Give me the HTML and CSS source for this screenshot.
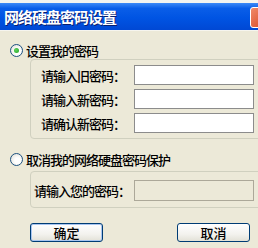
FILE: index.html
```html
<!DOCTYPE html>
<html lang="zh-CN">
  <head>
    <meta charset="UTF-8" />
    <title>网络硬盘密码设置</title>
    <link rel="stylesheet" href="styles.css">
  </head>
  <body>
    <div class="dialog">
      <div class="behind"></div>
      <header class="titlebar">
        <h1>网络硬盘密码设置</h1>
        <span class="close"></span>
      </header>
      <div class="client">
        <label class="option">
          <span class="radio checked"></span>
          <span>设置我的密码</span>
        </label>
        <div class="group">
          <div class="row">
            <span class="label">请输入旧密码：</span>
            <span class="input"></span>
          </div>
          <div class="row">
            <span class="label">请输入新密码：</span>
            <span class="input"></span>
          </div>
          <div class="row">
            <span class="label">请确认新密码：</span>
            <span class="input"></span>
          </div>
        </div>
        <label class="option second">
          <span class="radio"></span>
          <span>取消我的网络硬盘密码保护</span>
        </label>
        <div class="group group-cancel">
          <div class="row">
            <span class="label">请输入您的密码：</span>
            <span class="input disabled"></span>
          </div>
        </div>
        <div class="buttons">
          <button class="btn default">确定</button>
          <button class="btn">取消</button>
        </div>
      </div>
    </div>
  </body>
</html>
```

FILE: styles.css
```css
:root {
  --xp-face: #ece9d8;
  --xp-group: #d0d0bf;
  --xp-edit: #8c8c8c;
  --xp-btn-border: #003c74;
}

body {
  margin: 0;
  width: 258px;
  height: 248px;
  overflow: hidden;
  background: var(--xp-face);
  font-family: "Noto Sans CJK SC", "Noto Sans", sans-serif;
  font-size: 13px;
  font-weight: 500;
  letter-spacing: -1px;
  color: #000;
}

.dialog {
  display: flex;
  flex-direction: column;
  height: 248px;
}

.behind {
  height: 3px;
  background: #f4f4f0;
}

.titlebar {
  display: flex;
  align-items: center;
  height: 27px;
  padding-left: 4px;
  overflow: hidden;
  background: linear-gradient(#3d8af7 0%, #0a5ee8 20%, #0054e3 55%, #0048d4 100%);
}

.titlebar h1 {
  flex: 1;
  margin: 0;
  color: #fff;
  font-size: 15px;
  font-weight: 700;
  letter-spacing: -1px;
  line-height: 1;
  text-shadow: 1px 1px 0 #0a1e6e;
}

.close {
  width: 19px;
  height: 19px;
  margin-right: -13px;
  margin-top: 1px;
  border: 1px solid #fff;
  border-radius: 3px;
  background: linear-gradient(135deg, #f08a6a, #d8431c);
}

.client {
  flex: 1;
  padding: 11px 0 0 10px;
  border-top: 1px solid #f6f5ef;
}

.option {
  display: flex;
  align-items: center;
  gap: 3px;
  height: 16px;
}

.option.second {
  margin-top: 12px;
}

.radio {
  box-sizing: border-box;
  width: 13px;
  height: 13px;
  border: 1px solid #1c5180;
  border-radius: 50%;
  background: radial-gradient(circle at 60% 60%, #fff 30%, #dcdad0 100%);
  display: flex;
  align-items: center;
  justify-content: center;
}

.radio.checked::after {
  content: "";
  width: 5px;
  height: 5px;
  border-radius: 50%;
  background: radial-gradient(circle at 40% 40%, #5ed35e, #21a121);
}

.group {
  display: flex;
  flex-direction: column;
  gap: 4px;
  margin: 1px -12px 0 20px;
  padding: 5px 0 5px 10px;
  border: 1px solid var(--xp-group);
  border-radius: 4px;
}

.group-cancel {
  margin-top: 4px;
  padding: 8px 0 7px 3px;
}

.row {
  display: flex;
  align-items: center;
  height: 20px;
}

.label {
  width: 93px;
}

.group-cancel .label {
  width: 100px;
}

.input {
  box-sizing: border-box;
  width: 120px;
  height: 20px;
  border: 1px solid var(--xp-edit);
  background: #fff;
}

.input.disabled {
  height: 21px;
  border-color: #aca899;
  background: var(--xp-face);
}

.buttons {
  display: flex;
  gap: 74px;
  margin: 15px 0 0 20px;
}

.btn {
  box-sizing: border-box;
  width: 73px;
  height: 19px;
  padding: 0;
  border: 1px solid var(--xp-btn-border);
  border-radius: 3px;
  background: linear-gradient(#fff 0%, #f3f2ee 60%, #e3e1d7 100%);
  font: inherit;
  line-height: 1;
  color: #000;
}

.btn.default {
  box-shadow: inset 0 0 0 1px #a8c5f0;
}
```
